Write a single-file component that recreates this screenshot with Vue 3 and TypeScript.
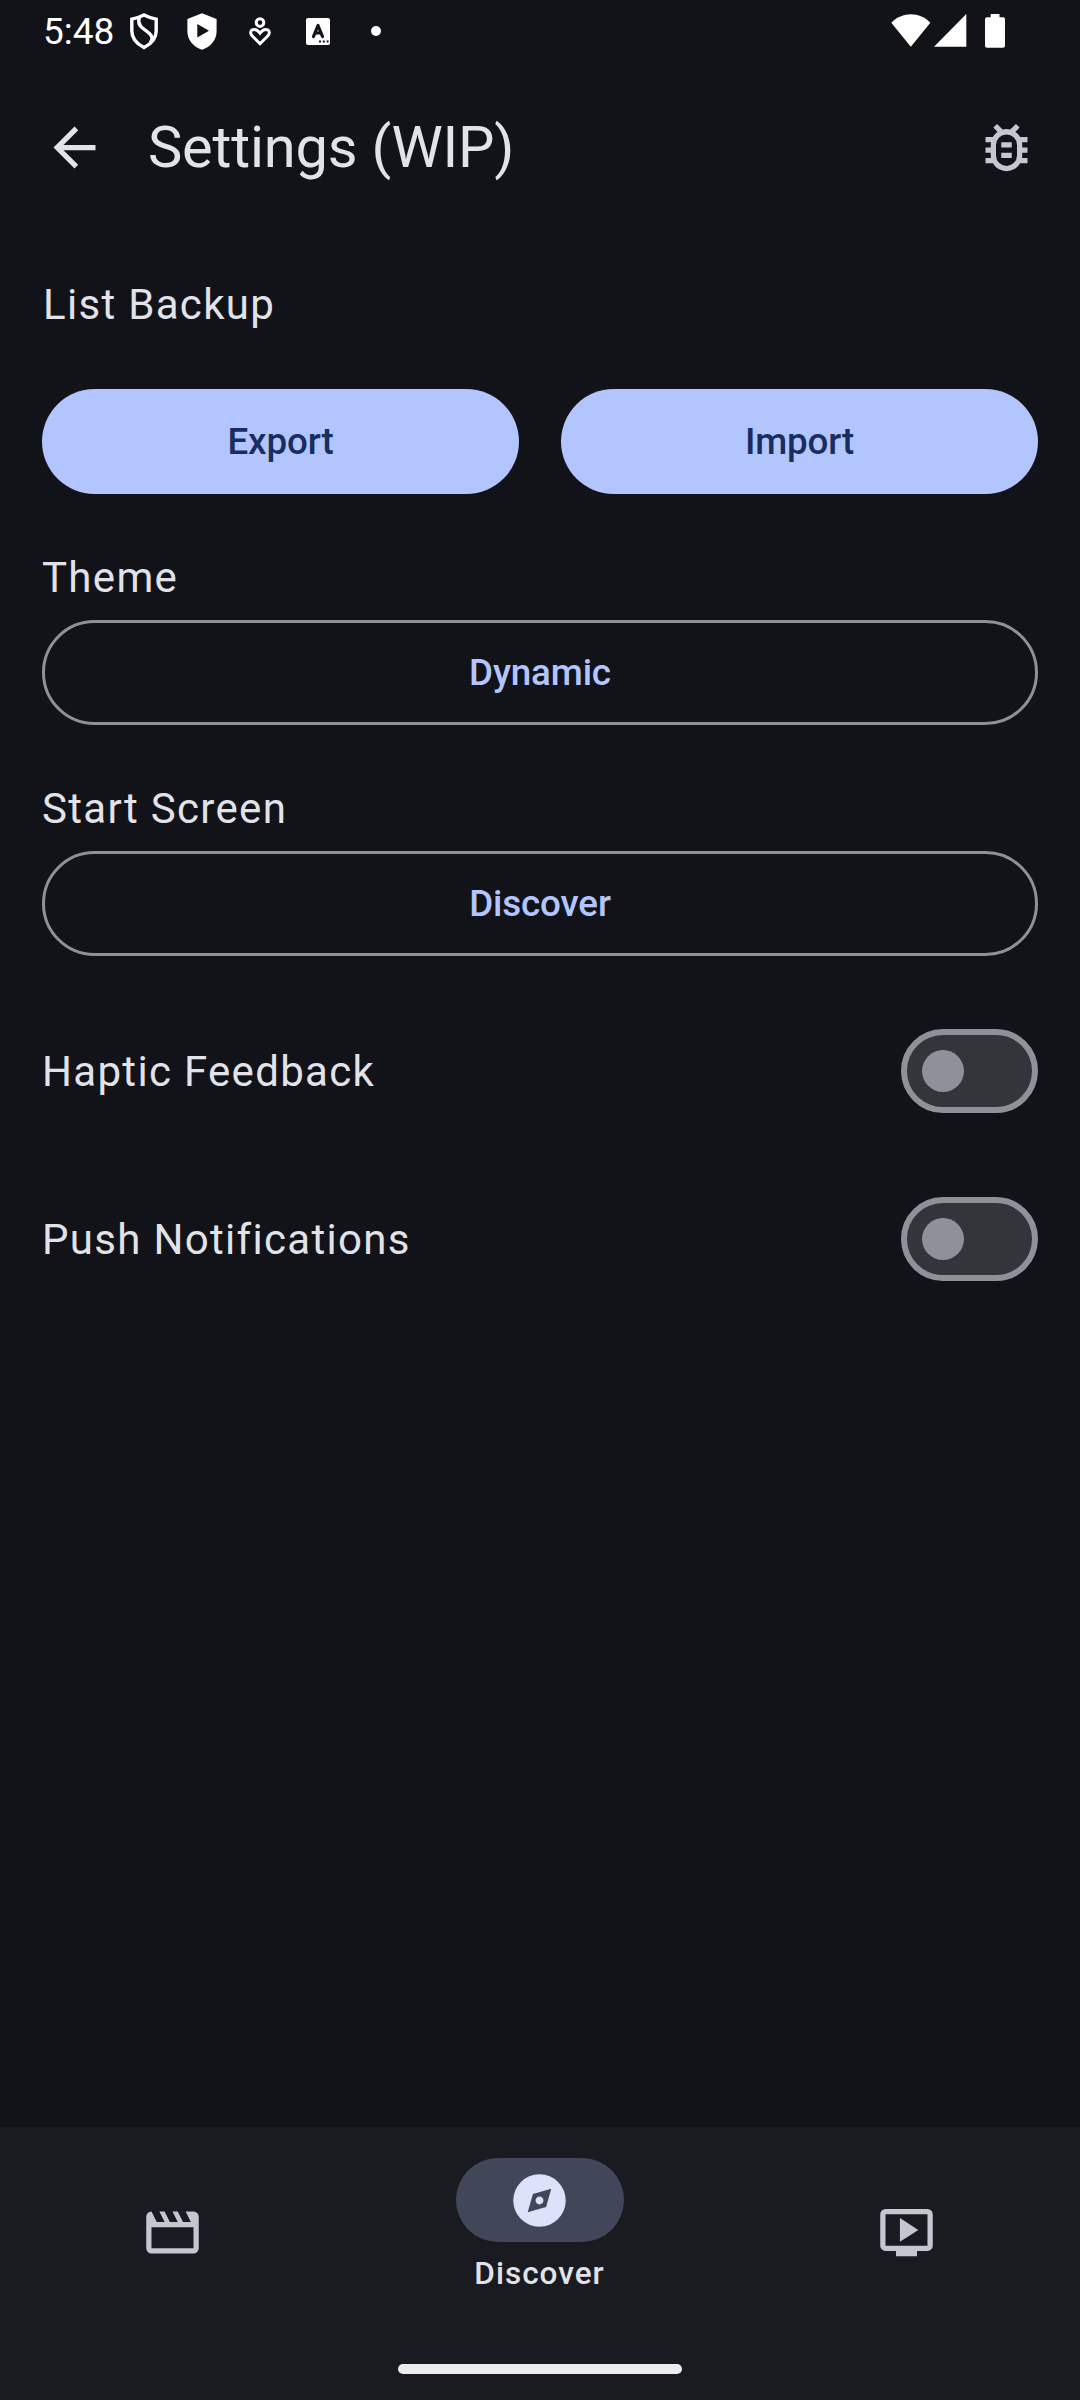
<script setup lang="ts">
import { ref } from 'vue'

interface Toggle {
  label: string
  on: boolean
}

const theme = ref('Dynamic')
const startScreen = ref('Discover')
const toggles = ref<Toggle[]>([
  { label: 'Haptic Feedback', on: false },
  { label: 'Push Notifications', on: false },
])
</script>

<template>
  <div class="screen">
    <div class="status">
      <span class="time">5:48</span>
      <svg class="shield-outline" width="32" height="38" viewBox="0 0 32 38">
        <path d="M15 3 Q21 6 27.200 7.200 V19 Q27.200 29.500 15 35.500 Q2.800 29.500 2.800 19 V7.200 Q9 6 15 3Z" />
        <path d="M10.500 5 Q8 11.500 13.500 16 L20.500 21.500 Q25.500 26 21 31" />
      </svg>
      <svg class="shield-play" width="30" height="37" viewBox="0 0 30 37">
        <path fill-rule="evenodd" d="M15 .3 29.6 6v12.5C29.6 27 23.5 34 15 36.8 6.500 34 .4 27 .4 18.500V6ZM10.300 11v13.600L22 17.800Z" />
      </svg>
      <svg class="care" width="22" height="30" viewBox="0 0 22 30">
        <circle cx="11" cy="5.600" r="3.800" />
        <path d="M11 26.700 3.300 19Q0 15 3.300 12.800 7.300 11.300 11 16.200 14.700 11.300 18.700 12.800 22 15 18.700 19Z" />
      </svg>
      <svg class="letter" width="24" height="27" viewBox="0 0 24 27">
        <rect width="24" height="27" rx="2" />
        <path d="M7.500 18.500 12 7.500 16.500 18.500M9 15h6" />
        <path class="dots" d="M13 23.500h2M16.800 23.500h2M20.600 23.500h2" />
      </svg>
      <span class="more"></span>
      <span class="grow"></span>
      <svg class="wifi" width="40" height="33" viewBox="0 0 40 33">
        <path d="M.3 8.800C11-2.700 29-2.700 39.300 8.800L19.800 32.700Z" />
      </svg>
      <svg class="signal" width="33" height="33" viewBox="0 0 33 33">
        <path d="M32.300 0V32.800H0Z" />
      </svg>
      <svg class="battery" width="20" height="34" viewBox="0 0 20 34">
        <path d="M5.700 0h8.800v3.200H18q2 0 2 2V31.700q0 2-2 2H2q-2 0-2-2V5.200q0-2 2-2h3.700Z" />
      </svg>
    </div>

    <header class="app-bar">
      <svg class="back" width="63" height="63" viewBox="0 0 24 24">
        <path d="M20 11H7.830l5.590-5.590L12 4l-8 8 8 8 1.410-1.410L7.830 13H20v-2z" />
      </svg>
      <h1>Settings (WIP)</h1>
      <svg class="bug" width="63" height="63" viewBox="0 -960 960 960">
        <path d="M480-200q66 0 113-47t47-113v-160q0-66-47-113t-113-47q-66 0-113 47t-47 113v160q0 66 47 113t113 47Zm-80-120h160v-80H400v80Zm0-160h160v-80H400v80Zm80 360q-65 0-120.500-32T272-240H160v-80h84q-3-20-3.500-40t-.5-40h-80v-80h80q0-20 .5-40t3.500-40h-84v-80h112q14-23 31.500-43t40.500-35l-64-66 56-56 86 86q28-9 57-9t57 9l88-86 56 56-66 66q23 15 41.500 34.500T688-640h112v80h-84q3 20 3.500 40t.5 40h80v80h-80q0 20-.5 40t-3.500 40h84v80H688q-32 56-87.500 88T480-120Z" />
      </svg>
    </header>

    <main>
      <div class="label title">List Backup</div>
      <div class="pair">
        <button class="filled">Export</button>
        <button class="filled">Import</button>
      </div>
      <div class="label field">Theme</div>
      <button class="outlined">{{ theme }}</button>
      <div class="label field">Start Screen</div>
      <button class="outlined">{{ startScreen }}</button>
      <div class="toggles">
        <div v-for="t in toggles" :key="t.label" class="row" @click="t.on = !t.on">
          <span class="label">{{ t.label }}</span>
          <span class="switch" :class="{ on: t.on }"><i></i></span>
        </div>
      </div>
    </main>

    <nav>
      <div class="tabs">
        <div class="tab first">
          <svg width="63" height="63" viewBox="0 -960 960 960">
            <path d="m160-800 80 160h120l-80-160h80l80 160h120l-80-160h80l80 160h120l-80-160h120q33 0 56.500 23.500T880-720v480q0 33-23.500 56.500T800-160H160q-33 0-56.500-23.500T80-240v-480q0-33 23.500-56.500T160-800Zm0 240v320h640v-320H160Z" />
          </svg>
        </div>
        <div class="tab active">
          <div class="pill">
            <svg width="63" height="63" viewBox="0 -960 960 960">
              <path d="m300-300 280-80 80-280-280 80-80 280Zm180-120q-25 0-42.500-17.500T420-480q0-25 17.500-42.500T480-540q25 0 42.500 17.500T540-480q0 25-17.500 42.500T480-420Zm0 340q-83 0-156-31.500T197-197q-54-54-85.500-127T80-480q0-83 31.500-156T197-763q54-54 127-85.500T480-880q83 0 156 31.500T763-763q54 54 85.500 127T880-480q0 83-31.500 156T763-197q-54 54-127 85.500T480-80Z" />
            </svg>
          </div>
          <span>Discover</span>
        </div>
        <div class="tab last">
          <svg width="63" height="63" viewBox="0 0 24 24">
            <path fill-rule="evenodd" d="M9.500 15.500l7-4.500-7-4.500zM8 21v-2H4q-.825 0-1.412-.588T2 17V5q0-.825.588-1.412T4 3h16q.825 0 1.413.588T22 5v12q0 .825-.587 1.413T20 19h-4v2zM4 17h16V5H4z" />
          </svg>
        </div>
      </div>
      <div class="gesture"></div>
    </nav>
  </div>
</template>

<style>
body {
  background: #111318;
}
</style>

<style scoped>
.screen {
  width: 1080px;
  height: 2400px;
  display: flex;
  flex-direction: column;
  background: #111318;
  color: #e2e2e9;
  font-family: Roboto, sans-serif;
  overflow: hidden;
}
svg {
  display: block;
  flex: none;
}
.status {
  height: 64px;
  display: flex;
  align-items: flex-start;
  fill: #fff;
  color: #fff;
}
.time {
  width: 86px;
  margin-left: 43px;
  margin-top: 10px;
  font-size: 37px;
  line-height: 44px;
  white-space: nowrap;
}
.shield-outline {
  margin-top: 12px;
  fill: none;
  stroke: #fff;
  stroke-width: 3.4;
}
.shield-play {
  margin: 13px 0 0 26px;
}
.care {
  margin: 17px 0 0 32px;
  fill: none;
  stroke: #fff;
  stroke-width: 3;
}
.letter {
  margin: 18px 0 0 35px;
}
.letter path {
  fill: none;
  stroke: #111318;
  stroke-width: 3.2;
  stroke-linecap: round;
  stroke-linejoin: round;
}
.letter .dots {
  stroke-width: 2;
  stroke-linecap: butt;
}
.more {
  width: 10px;
  height: 10px;
  margin: 26px 0 0 41px;
  border-radius: 50%;
  background: #fff;
}
.grow {
  flex: 1;
}
.wifi {
  margin-top: 14px;
}
.signal {
  margin: 14px 0 0 3px;
}
.battery {
  margin: 14px 75px 0 18px;
}
.app-bar {
  height: 167px;
  display: flex;
  align-items: center;
  padding: 0 42px 0 43px;
}
.back {
  fill: #e2e2e9;
}
h1 {
  flex: 1;
  margin: 0 0 2px 42px;
  font-size: 57.75px;
  line-height: 74px;
  font-weight: 400;
  letter-spacing: -0.2px;
}
.bug {
  fill: #c5c6d0;
}
main {
  flex: 1;
  padding: 42px 42px 0;
}
.label {
  height: 63px;
  font-size: 42px;
  line-height: 63px;
  letter-spacing: 1.3125px;
}
.title {
  padding-left: 1px;
}
.pair {
  display: flex;
  gap: 42px;
  margin-top: 53px;
}
button {
  display: block;
  width: 100%;
  height: 105px;
  padding: 0;
  border: 0;
  border-radius: 53px;
  font-family: inherit;
  font-size: 36.75px;
  font-weight: 500;
  letter-spacing: -0.15px;
}
.filled {
  flex: 1;
  background: #b3c5ff;
  color: #182e60;
}
.outlined {
  background: transparent;
  border: 3px solid #8f9099;
  color: #b3c5ff;
}
.field {
  margin: 52px 0 11px;
}
.toggles {
  display: flex;
  flex-direction: column;
  gap: 84px;
  margin-top: 73px;
}
.row {
  display: flex;
  align-items: center;
  justify-content: space-between;
}
.switch {
  box-sizing: border-box;
  width: 137px;
  height: 84px;
  display: flex;
  align-items: center;
  padding: 0 15px;
  border: 6px solid #8f9099;
  border-radius: 42px;
  background: #33353a;
}
.switch.on {
  justify-content: flex-end;
}
.switch i {
  width: 42px;
  height: 42px;
  border-radius: 50%;
  background: #8f9099;
}
nav {
  height: 273px;
  display: flex;
  flex-direction: column;
  align-items: center;
  background: #1a1b20;
}
.tabs {
  width: 100%;
  height: 237px;
  display: flex;
  justify-content: space-between;
}
.tab {
  fill: #c5c6d0;
}
.first {
  margin: 74px 0 0 141px;
}
.last {
  margin: 74px 142px 0 0;
}
.active {
  display: flex;
  flex-direction: column;
  align-items: center;
  margin-top: 31px;
  fill: #dde1f9;
}
.pill {
  width: 168px;
  height: 84px;
  display: flex;
  align-items: center;
  justify-content: center;
  border-radius: 42px;
  background: #424659;
}
.active span {
  margin-top: 11px;
  font-size: 31.5px;
  line-height: 42px;
  font-weight: 500;
  letter-spacing: 1px;
}
.gesture {
  width: 284px;
  height: 10px;
  border-radius: 5px;
  background: #ececec;
}
</style>
